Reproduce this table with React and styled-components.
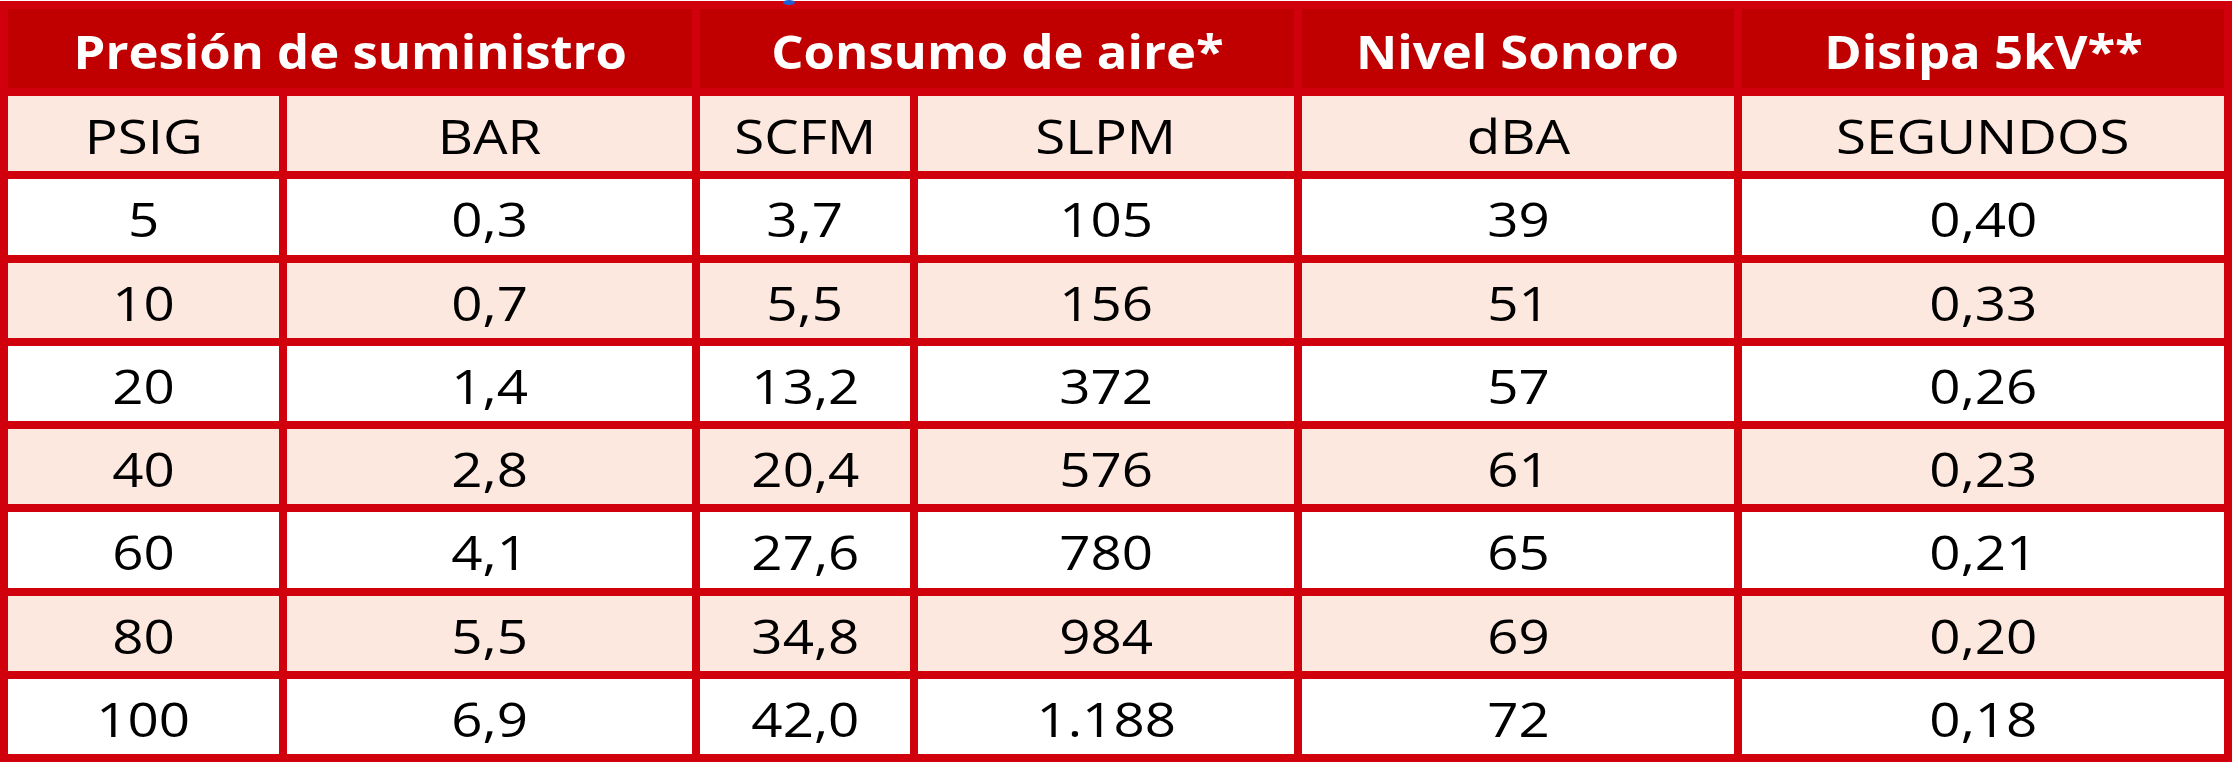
import React from 'react'
import styled, { createGlobalStyle } from 'styled-components'

const GlobalStyle = createGlobalStyle`
    html, body {
        margin: 0;
        padding: 0;
        background: #ffffff;
    }
    body {
        font-family: "Open Sans", "Noto Sans", sans-serif;
    }
`

const Page = styled.div`
    position: relative;
    width: 2238px;
    height: 770px;
    padding-top: 1px;
    box-sizing: border-box;
`

const Mark = styled.span`
    position: absolute;
    left: 783px;
    top: 0;
    width: 12px;
    height: 5px;
    border-radius: 50%;
    background: #1f5fd6;
`

const Table = styled.div`
    display: grid;
    grid-template-columns: 271px 405px 210px 376px 432px 482px;
    grid-template-rows: 79px repeat(8, 75.25px);
    gap: 8px;
    padding: 8px;
    width: 2232px;
    box-sizing: border-box;
    background: #d0000c;
`

const HeadCell = styled.div`
    grid-column: span ${p => p.span || 1};
    display: flex;
    align-items: center;
    justify-content: center;
    padding-top: 5px;
    background: #c00000;
    color: #ffffff;
    font-weight: 700;
    font-size: 47px;
`

const Cell = styled.div`
    display: flex;
    align-items: center;
    justify-content: center;
    padding-top: 5px;
    background: ${p => (p.shaded ? '#fde8df' : '#ffffff')};
    color: #000000;
    font-size: 48px;
    font-weight: 500;
`

const Label = styled.span`
    display: inline-block;
    transform: scaleX(${p => p.stretch || 1.14});
    white-space: nowrap;
    line-height: 1;
`

const units = ['PSIG', 'BAR', 'SCFM', 'SLPM', 'dBA', 'SEGUNDOS']

const rows = [
  ['5', '0,3', '3,7', '105', '39', '0,40'],
  ['10', '0,7', '5,5', '156', '51', '0,33'],
  ['20', '1,4', '13,2', '372', '57', '0,26'],
  ['40', '2,8', '20,4', '576', '61', '0,23'],
  ['60', '4,1', '27,6', '780', '65', '0,21'],
  ['80', '5,5', '34,8', '984', '69', '0,20'],
  ['100', '6,9', '42,0', '1.188', '72', '0,18'],
]

const App = () => {
  return (
    <Page>
      <GlobalStyle />
      <Table>
        <HeadCell span={2}><Label stretch={1.08}>Presión de suministro</Label></HeadCell>
        <HeadCell span={2}><Label stretch={1.08}>Consumo de aire*</Label></HeadCell>
        <HeadCell><Label stretch={1.08}>Nivel Sonoro</Label></HeadCell>
        <HeadCell><Label stretch={1.08}>Disipa 5kV**</Label></HeadCell>
        {units.map(u => (
          <Cell key={u} shaded><Label>{u}</Label></Cell>
        ))}
        {rows.map((row, i) =>
          row.map((v, j) => (
            <Cell key={i + '-' + j} shaded={i % 2 === 1}><Label>{v}</Label></Cell>
          ))
        )}
      </Table>
      <Mark />
    </Page>
  )
}

export default App
